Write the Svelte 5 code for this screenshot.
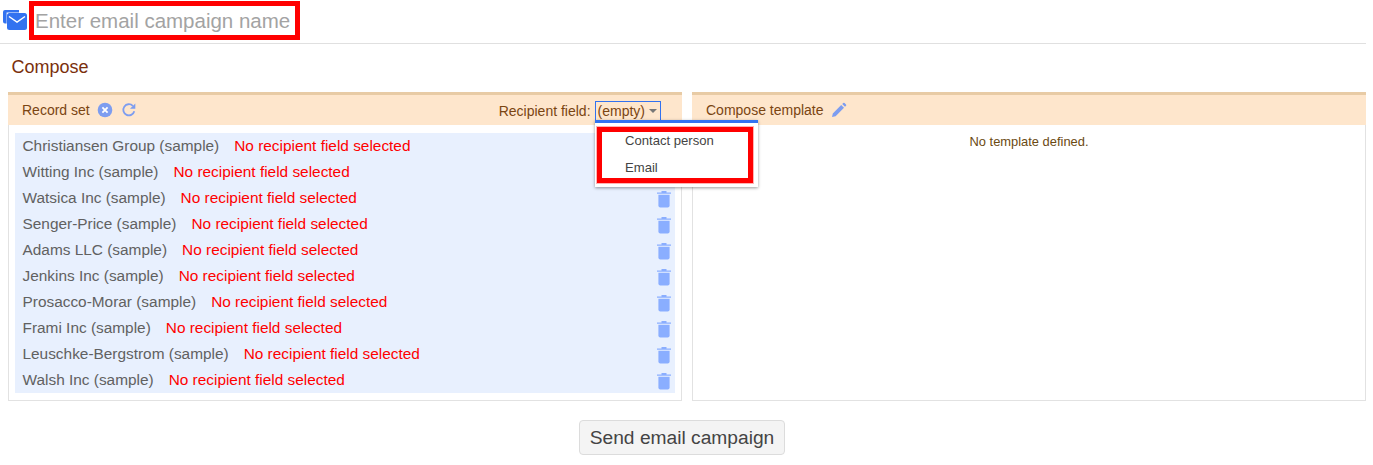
<script>
  const records = [
    "Christiansen Group (sample)",
    "Witting Inc (sample)",
    "Watsica Inc (sample)",
    "Senger-Price (sample)",
    "Adams LLC (sample)",
    "Jenkins Inc (sample)",
    "Prosacco-Morar (sample)",
    "Frami Inc (sample)",
    "Leuschke-Bergstrom (sample)",
    "Walsh Inc (sample)",
  ];
</script>

<div class="page">
  <header class="top">
    <svg class="mail" viewBox="0 0 24 20" width="24" height="20" aria-hidden="true">
      <path d="M0 2a2 2 0 0 1 2-2h14v2.500H3.600v11H2a2 2 0 0 1-2-2z" fill="#3272f0" />
      <rect x="4" y="3" width="20" height="17" rx="2.500" fill="#3272f0" />
      <path d="M6 6.500 14 12l8-5.500" fill="none" stroke="#fff" stroke-width="1.500" />
    </svg>
    <div class="name-box">Enter email campaign name</div>
  </header>

  <h2>Compose</h2>

  <div class="panels">
    <section class="panel">
      <div class="panel-head">
        <span>Record set</span>
        <svg class="ico" viewBox="0 0 16 16" width="16" height="16" aria-hidden="true">
          <circle cx="8" cy="8" r="7.300" fill="#7d9df0" />
          <path d="M5.400 5.400l5.200 5.200M10.600 5.400l-5.200 5.200" stroke="#fff" stroke-width="1.800" />
        </svg>
        <svg class="ico refresh" viewBox="0 0 16 16" width="16" height="16" aria-hidden="true">
          <path d="M13.300 9.300A5.600 5.600 0 1 1 11.800 3.800" fill="none" stroke="#7d9df0" stroke-width="1.800" />
          <path d="M14.300 1.500v5.300H9z" fill="#7d9df0" />
        </svg>
        <div class="recipient">
          <span>Recipient field:</span>
          <span class="select">(empty)<i class="caret"></i></span>
        </div>
      </div>
      <div class="panel-body">
        <ul class="list">
          {#each records as r}
            <li>
              <span class="rec">{r}</span>
              <span class="err">No recipient field selected</span>
              <svg class="trash" viewBox="0 0 16 20" width="16" height="20" aria-hidden="true">
                <path d="M1 3.400h14v1.400H1zM5.500 2h5v1.400h-5z" fill="#8aaeff" />
                <path d="M2.400 5.800h11.200V16.500a2 2 0 0 1-2 2H4.400a2 2 0 0 1-2-2z" fill="#8aaeff" />
              </svg>
            </li>
          {/each}
        </ul>
      </div>

      <div class="menu">
        <div class="item">Contact person</div>
        <div class="item">Email</div>
        <div class="mark"></div>
      </div>
    </section>

    <section class="panel">
      <div class="panel-head tpl">
        <span>Compose template</span>
        <svg class="ico" viewBox="0 0 16 16" width="16" height="16" aria-hidden="true">
          <path d="M1 15l.8-3.600L10.200 3l2.800 2.800-8.400 8.400zM11.200 2l1-1a1 1 0 0 1 1.400 0l1.400 1.400a1 1 0 0 1 0 1.400l-1 1z" fill="#7d9df0" />
        </svg>
      </div>
      <p class="empty">No template defined.</p>
    </section>
  </div>

  <div class="actions">
    <button>Send email campaign</button>
  </div>
</div>

<style>
  :global(body) {
    margin: 0;
    background: #fff;
    font-family: "Liberation Sans", Arial, sans-serif;
  }
  .page {
    width: 1373px;
    height: 465px;
    overflow: hidden;
    box-sizing: border-box;
  }
  .top {
    width: 1366px;
    height: 44px;
    box-sizing: border-box;
    border-bottom: 1px solid #e0e0e0;
    display: flex;
    align-items: flex-start;
    padding-left: 3px;
  }
  .mail {
    margin-top: 10px;
    margin-right: 2px;
  }
  .name-box {
    width: 271px;
    height: 39px;
    box-sizing: border-box;
    border: 5px solid #f00;
    margin-top: 1px;
    padding-left: 1px;
    font-size: 20.5px;
    line-height: 29px;
    color: #a3a3a3;
    white-space: nowrap;
  }
  h2 {
    margin: 0;
    padding: 13px 0 0 11.5px;
    height: 48px;
    box-sizing: border-box;
    font-size: 18px;
    line-height: 21px;
    font-weight: 400;
    color: #7a2f0c;
  }
  .panels {
    display: flex;
    gap: 10px;
    margin-left: 8px;
    width: 1358px;
  }
  .panel {
    position: relative;
    flex: 1;
    height: 309px;
    box-sizing: border-box;
    border: 1px solid #e2e2e2;
    border-top: none;
  }
  .panel:first-child {
    z-index: 1;
  }
  .panel-head {
    display: flex;
    align-items: center;
    height: 33px;
    margin: 0 -1px;
    box-sizing: border-box;
    border-top: 3px solid #e8cba5;
    padding-left: 14px;
    background: #fee6cc;
    color: #7a4512;
    font-size: 14px;
  }
  .ico {
    margin-left: 8px;
  }
  .panel-head > span + .ico {
    margin-left: 7.5px;
  }
  .refresh {
    margin-left: 8px;
  }
  .recipient {
    margin-left: auto;
    margin-right: 21px;
    display: flex;
    align-items: center;
    gap: 4px;
    padding-top: 2px;
  }
  .select {
    display: flex;
    align-items: center;
    height: 18px;
    padding: 0 3px 0 2px;
    border: 1px solid #3272f0;
    line-height: 16px;
  }
  .caret {
    margin-left: 4px;
    width: 0;
    height: 0;
    border: 4.5px solid transparent;
    border-top: 4.5px solid #777;
    border-bottom: none;
  }
  .panel-body {
    padding: 8px 6px;
  }
  .list {
    list-style: none;
    margin: 0;
    padding: 0;
    background: #e8f0fe;
  }
  .list li {
    display: flex;
    align-items: center;
    height: 26px;
    padding-left: 7.5px;
    font-size: 15.4px;
  }
  .rec {
    color: #616161;
  }
  .err {
    margin-left: 15px;
    color: #f00;
  }
  .trash {
    margin-left: auto;
    margin-right: 3px;
    margin-top: 1px;
  }
  .menu {
    position: absolute;
    left: 586px;
    top: 28px;
    width: 163px;
    height: 67px;
    box-sizing: border-box;
    border-top: 3px solid #3272f0;
    background: #fff;
    box-shadow: 0 1px 3px rgba(0, 0, 0, 0.4);
    padding-top: 4px;
    font-size: 13.1px;
    color: #444;
  }
  .item {
    height: 27px;
    line-height: 27px;
    padding-left: 30px;
  }
  .mark {
    position: absolute;
    left: 2px;
    top: 4px;
    width: 156px;
    height: 56px;
    box-sizing: border-box;
    border: 5px solid #f00;
    outline: 1px solid rgba(255, 0, 0, 0.3);
  }
  .empty {
    margin: 9px 0 0;
    text-align: center;
    font-size: 12.9px;
    line-height: 15px;
    color: #6b4a12;
  }
  .actions {
    display: flex;
    justify-content: center;
    padding-top: 19px;
    width: 1364px;
  }
  button {
    height: 35px;
    width: 206px;
    padding: 0;
    border: 1px solid #dcdcdc;
    border-radius: 4px;
    background: #f4f4f4;
    color: #444;
    font-family: inherit;
    font-size: 19.2px;
  }
</style>
